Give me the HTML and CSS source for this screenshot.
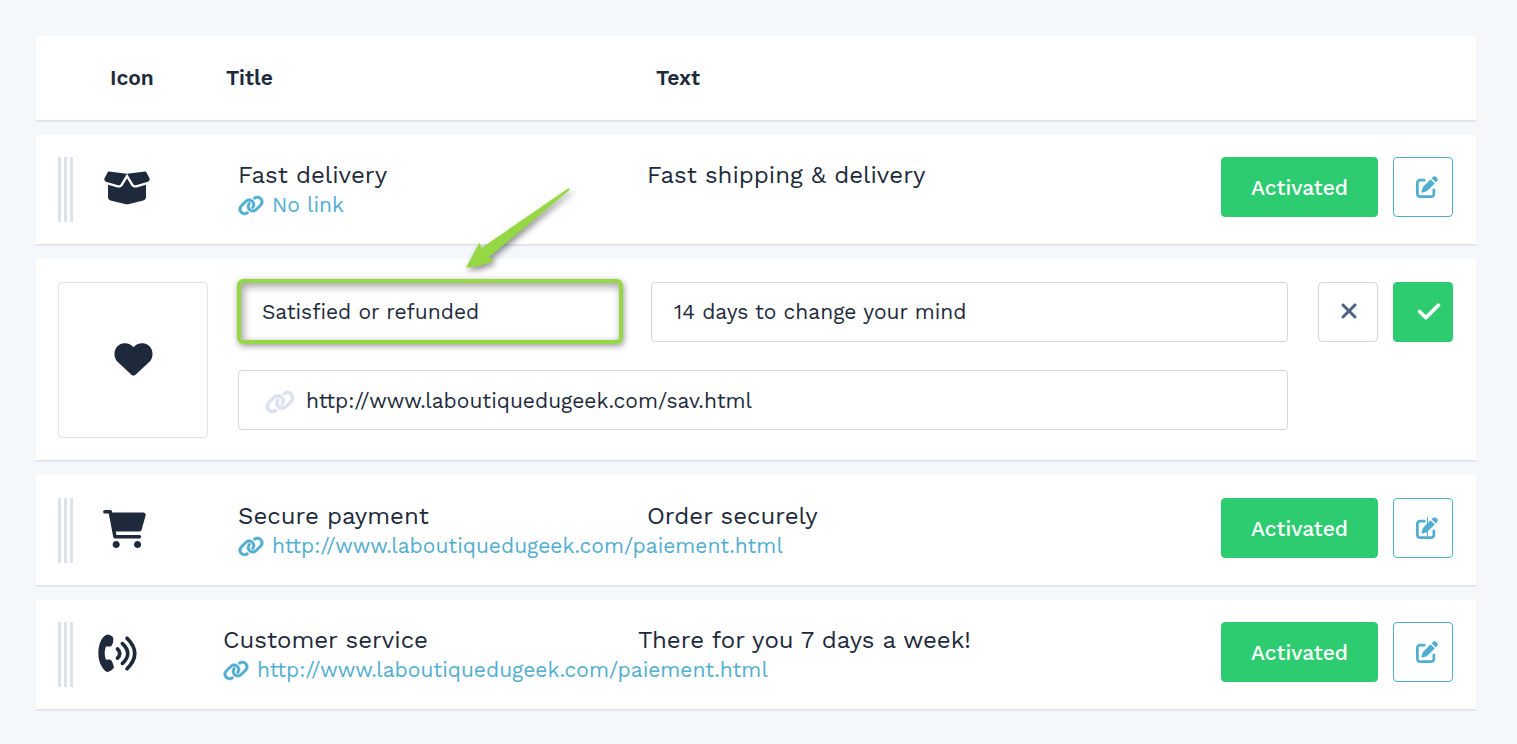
FILE: index.html
```html
<!DOCTYPE html>
<html lang="en">
<head>
<meta charset="utf-8">
<meta name="viewport" content="width=device-width, initial-scale=1">
<title>Reassurance blocks</title>
<link rel="stylesheet" href="styles.css">
</head>
<body>
<svg class="sprite" aria-hidden="true">
  <symbol id="link" viewBox="0 0 640 512"><path d="M579.8 267.7c56.500-56.500 56.500-148 0-204.500c-50-50-128.800-56.500-186.300-15.400l-1.600 1.100c-14.400 10.300-17.700 30.300-7.400 44.600s30.300 17.700 44.600 7.400l1.600-1.100c32.100-22.900 76-19.300 103.800 8.600c31.500 31.500 31.500 82.500 0 114L422.300 334.800c-31.500 31.500-82.500 31.500-114 0c-27.900-27.900-31.500-71.800-8.600-103.800l1.100-1.600c10.300-14.400 6.900-34.400-7.400-44.600s-34.400-6.900-44.600 7.400l-1.100 1.600C206.500 251.200 213 330 263 380c56.500 56.500 148 56.500 204.500 0L579.800 267.700zM60.200 244.300c-56.500 56.500-56.500 148 0 204.500c50 50 128.800 56.500 186.300 15.400l1.600-1.100c14.400-10.300 17.700-30.300 7.400-44.600s-30.300-17.700-44.600-7.400l-1.600 1.100c-32.100 22.900-76 19.300-103.800-8.600C74 372 74 321 105.500 289.500L217.700 177.200c31.500-31.500 82.500-31.500 114 0c27.900 27.900 31.500 71.800 8.600 103.900l-1.100 1.600c-10.300 14.400-6.900 34.400 7.400 44.600s34.400 6.900 44.600-7.400l1.100-1.600C433.500 260.800 427 182 377 132c-56.500-56.500-148-56.500-204.500 0L60.200 244.300z"/></symbol>
  <symbol id="edit" viewBox="0 0 512 512"><path d="M490.300 40.400C512.200 62.270 512.200 97.730 490.300 119.600L460.300 149.700L362.300 51.720L392.400 21.660C414.300-.2135 449.700-.2135 471.600 21.660L490.300 40.400zM172.400 241.700L339.700 74.340L437.700 172.300L270.300 339.600C264.200 345.800 256.700 350.400 248.400 353.200L159.600 382.800C150.100 385.600 141.500 383.400 135 376.100C128.600 370.500 126.400 361 129.200 352.400L158.800 263.600C161.600 255.300 166.200 247.800 172.400 241.700zM192 64C209.700 64 224 78.330 224 96C224 113.700 209.700 128 192 128H96C78.330 128 64 142.300 64 160V416C64 433.700 78.330 448 96 448H352C369.700 448 384 433.700 384 416V320C384 302.300 398.300 288 416 288C433.700 288 448 302.300 448 320V416C448 469 405 512 352 512H96C42.980 512 0 469 0 416V160C0 106.100 42.980 64 96 64H192z"/></symbol>
</svg>

<main class="page">
  <table class="blocks">
    <thead>
      <tr class="card head">
        <th scope="col">Icon</th>
        <th scope="col">Title</th>
        <th scope="col">Text</th>
      </tr>
    </thead>
    <tbody>
      <tr class="card row">
        <td><span class="grip"></span></td>
        <td class="pict"><svg width="48" height="38" viewBox="0 0 640 512"><path d="M75.230 33.400L320 64L564.800 33.400C571.500 32.560 578 36.060 581.100 42.120L622.800 125.500C631.700 143.400 622.200 165.100 602.900 170.600L439.600 217.300C425.700 221.200 410.800 215.400 403.400 202.100L320 64L236.600 202.100C229.200 215.400 214.300 221.200 200.400 217.300L37.070 170.600C17.810 165.100 8.283 143.400 17.240 125.500L58.940 42.120C61.970 36.060 68.500 32.560 75.230 33.400zM321.100 128L375.900 219.400C390.800 244.200 420.500 255.100 448.400 248L576 211.600V378.500C576 400.500 561 419.700 539.600 425.100L335.500 476.100C325.300 478.700 314.700 478.700 304.500 476.100L100.400 425.100C78.990 419.700 64 400.500 64 378.500V211.600L191.600 248C219.500 255.100 249.200 244.200 264.100 219.400L318.900 128H321.100z"/></svg></td>
        <td class="info"><span class="name">Fast delivery</span><a class="url" href="#"><svg class="chain"><use href="#link"/></svg>No link</a></td>
        <td class="info"><span class="name">Fast shipping &amp; delivery</span></td>
        <td class="actions"><button class="btn status" type="button">Activated</button><button class="btn edit" type="button" aria-label="Edit"><svg class="glyph"><use href="#edit"/></svg></button></td>
      </tr>
      <tr class="card row editing">
        <td><button class="picker" type="button" aria-label="Choose icon"><svg width="39" height="38" viewBox="0 0 512 512"><path d="M47.600 300.400L228.300 469.100c7.500 7 17.400 10.900 27.700 10.900s20.200-3.900 27.700-10.900L464.400 300.400c30.400-28.300 47.600-68 47.600-109.500v-5.800c0-69.900-50.500-129.500-119.400-141C347 36.500 300.600 51.400 268 84L256 96 244 84c-32.600-32.600-79-47.500-124.600-39.900C50.500 55.600 0 115.200 0 185.100v5.800c0 41.500 17.200 81.200 47.600 109.500z"/></svg></button></td>
        <td class="fields">
          <div class="marked">
            <input class="field" type="text" aria-label="Title" value="Satisfied or refunded">
            <span class="marker"></span>
            <svg class="arrow" width="120" height="96" viewBox="0 0 120 96" aria-hidden="true"><path d="M8 86.500L21.500 61.500L23.500 67L110 7.500Q112.500 7 111 9.500L30.500 76.500L36.500 79.500Q22 86 8 86.500Z"/></svg>
          </div>
          <input class="field" type="text" aria-label="Text" value="14 days to change your mind">
          <div class="linked">
            <svg class="chain pale"><use href="#link"/></svg>
            <input class="field" type="text" aria-label="Link" value="http://www.laboutiquedugeek.com/sav.html">
          </div>
        </td>
        <td class="actions"><button class="btn cancel" type="button" aria-label="Cancel"><svg width="16" height="24" viewBox="0 0 320 512"><path d="M310.600 361.400c12.500 12.500 12.500 32.750 0 45.250C304.400 412.900 296.200 416 288 416s-16.380-3.125-22.620-9.375L160 301.300L54.630 406.600C48.380 412.900 40.190 416 32 416S15.630 412.900 9.375 406.600c-12.500-12.500-12.500-32.750 0-45.250l105.400-105.400L9.375 150.600c-12.500-12.500-12.500-32.750 0-45.250s32.750-12.500 45.250 0L160 210.800l105.400-105.400c12.500-12.500 32.750-12.500 45.250 0s12.500 32.750 0 45.250l-105.400 105.400L310.600 361.400z"/></svg></button><button class="btn save" type="button" aria-label="Save"><svg class="bold" width="22" height="25" viewBox="0 0 448 512"><path d="M438.600 105.400c12.500 12.500 12.500 32.800 0 45.300l-256 256c-12.500 12.500-32.800 12.500-45.300 0l-128-128c-12.500-12.500-12.500-32.800 0-45.300s32.800-12.500 45.300 0L160 338.700 393.400 105.400c12.500-12.500 32.800-12.500 45.300 0z"/></svg></button></td>
      </tr>
      <tr class="card row roomy">
        <td><span class="grip"></span></td>
        <td class="pict"><svg width="43" height="38" viewBox="0 0 576 512"><path d="M96 0C107.500 0 117.400 8.190 119.600 19.510L121.100 32H541.800C562.100 32 578.300 52.250 572.600 72.660L518.600 264.700C514.700 278.500 502.100 288 487.400 288H170.700L179.900 336H488C501.300 336 512 346.700 512 360C512 373.300 501.300 384 488 384H159.100C148.500 384 138.600 375.800 136.400 364.500L76.140 48H24C10.750 48 0 37.250 0 24C0 10.750 10.750 0 24 0H96zM128 464C128 437.500 149.500 416 176 416C202.500 416 224 437.500 224 464C224 490.500 202.500 512 176 512C149.500 512 128 490.500 128 464zM512 464C512 490.500 490.500 512 464 512C437.500 512 416 490.500 416 464C416 437.500 437.500 416 464 416C490.500 416 512 437.500 512 464z"/></svg></td>
        <td class="info"><span class="name">Secure payment</span><a class="url" href="#"><svg class="chain"><use href="#link"/></svg>http://www.laboutiquedugeek.com/paiement.html</a></td>
        <td class="info"><span class="name">Order securely</span></td>
        <td class="actions"><button class="btn status" type="button">Activated</button><button class="btn edit" type="button" aria-label="Edit"><svg class="glyph" viewBox="0 0 22 22"><use href="#edit" width="22" height="22"/><path d="M11 0h1v22h-1z"/></svg></button></td>
      </tr>
      <tr class="card row tight">
        <td><span class="grip"></span></td>
        <td class="pict"><svg width="39" height="39" viewBox="0 0 118 118"><path d="M28 2C33 1 38 5 43 7C48 12 47 23 44 30C42 35 39 38 35 38H24C19 50 19 66 24 78L36 77C43 79 45 90 48 98C49 106 38 111 30 115C20 115 1 92 1 59C1 27 14 4 28 2Z"/><path class="wave" d="M59 45Q73 59 59 73M74 29Q106 59 74 89M88 13Q134 59 88 105"/></svg></td>
        <td class="info"><span class="name">Customer service</span><a class="url" href="#"><svg class="chain"><use href="#link"/></svg>http://www.laboutiquedugeek.com/paiement.html</a></td>
        <td class="info"><span class="name">There for you 7 days a week!</span></td>
        <td class="actions"><button class="btn status" type="button">Activated</button><button class="btn edit" type="button" aria-label="Edit"><svg class="glyph"><use href="#edit"/></svg></button></td>
      </tr>
    </tbody>
  </table>
</main>
</body>
</html>
```

FILE: styles.css
```css
* { box-sizing: border-box; }

body {
  margin: 0;
  background: #f4f8fb;
  color: #1e2a3c;
  font-family: "Work Sans", Inter, "Noto Sans", sans-serif;
  font-weight: 400;
}

svg { display: block; fill: currentColor; flex: none; }
.sprite { position: absolute; width: 0; height: 0; }
.page { padding: 36px 41px 34px 36px; }

.blocks, .blocks thead, .blocks tbody { display: flex; flex-direction: column; gap: 14px; }
.blocks th, .blocks td { display: block; padding: 0; text-align: left; }

.card {
  display: grid;
  background: #fff;
  border-bottom: 1px solid #dde1ed;
  box-shadow: 0 1px 1px #e6eaf2;
}

.head {
  grid-template-columns: 116px 430px 1fr;
  padding: 27px 23px 27px 74px;
  font-size: 21px;
  line-height: 30px;
}
.head th { font-weight: 600; }

.row {
  grid-template-columns: 45px 135px 409px 1fr auto;
  padding: 22px 23px 22px 22px;
}
.row.roomy { padding-top: 23px; }
.row.tight { grid-template-columns: 40px 125px 415px 1fr auto; }

.grip {
  display: block;
  width: 15px;
  height: 65px;
  background: repeating-linear-gradient(90deg, #dde1ed 0 3px, transparent 3px 6px);
}
.blocks .pict { display: flex; align-items: center; padding-bottom: 3px; }
.wave { fill: none; stroke: currentColor; stroke-width: 11; stroke-linecap: round; }
.bold { overflow: visible; stroke: currentColor; stroke-width: 16; }

.blocks .info { padding-top: 3px; white-space: nowrap; line-height: 30px; }
.name { display: block; font-size: 24px; }
.url {
  display: flex;
  align-items: center;
  gap: 8px;
  color: #52aed0;
  font-size: 21px;
  text-decoration: none;
}
.chain { width: 26px; height: 21px; }
.url .chain { overflow: visible; stroke: currentColor; stroke-width: 12; }

.blocks .actions { display: flex; align-items: flex-start; gap: 15px; }
.btn {
  display: flex;
  align-items: center;
  justify-content: center;
  width: 60px;
  height: 60px;
  padding: 0;
  border: 1px solid #2ecc71;
  border-radius: 4px;
  background: #2ecc71;
  color: #fff;
  font: 500 21px/30px "Work Sans", Inter, "Noto Sans", sans-serif;
}
.status { width: 157px; padding-top: 2px; }
.edit { padding-left: 7px; border-color: #52aed0; background: #fff; color: #52aed0; }
.glyph { width: 22px; height: 22px; }
.cancel { padding: 0 0 2px 2px; border-color: #d0d4e6; background: #fff; color: #4e6284; }
.save { padding: 0 0 2px 12px; }

.row.editing {
  grid-template-columns: 150px 1fr auto;
  column-gap: 30px;
  padding-top: 23px;
}
.picker {
  display: flex;
  align-items: center;
  justify-content: center;
  width: 150px;
  height: 156px;
  padding: 0 0 3px;
  border: 1px solid #dde1ed;
  border-radius: 4px;
  background: #fff;
  color: inherit;
}
.blocks .fields {
  display: grid;
  grid-template-columns: 384fr 637fr;
  gap: 28px 29px;
  align-content: start;
}
.field {
  display: block;
  width: 100%;
  height: 60px;
  padding: 0 22px 2px;
  border: 1px solid #d6d7da;
  border-radius: 4px;
  background: #fff;
  color: inherit;
  font: 400 21px/30px "Work Sans", Inter, "Noto Sans", sans-serif;
}
.marked, .linked { position: relative; }
.linked { grid-column: 1 / -1; }
.linked .field { padding: 0 22px 0 67px; }
.marked .field { padding-left: 23px; }
.pale { position: absolute; left: 27px; top: 20px; width: 30px; height: 24px; color: #dde1ed; stroke: #dde1ed; stroke-width: 12; }

.marker {
  position: absolute;
  inset: -3px -1px -2px;
  border: 4px solid #96d844;
  border-radius: 6px;
  box-shadow: 1px 2px 6px rgba(0, 0, 0, .4), inset 2px 3px 8px rgba(0, 0, 0, .4);
  pointer-events: none;
}
.arrow {
  position: absolute;
  left: 220px;
  top: -101px;
  fill: #96d844;
  filter: drop-shadow(2px 3px 3px rgba(0, 0, 0, .45));
  pointer-events: none;
}
```
